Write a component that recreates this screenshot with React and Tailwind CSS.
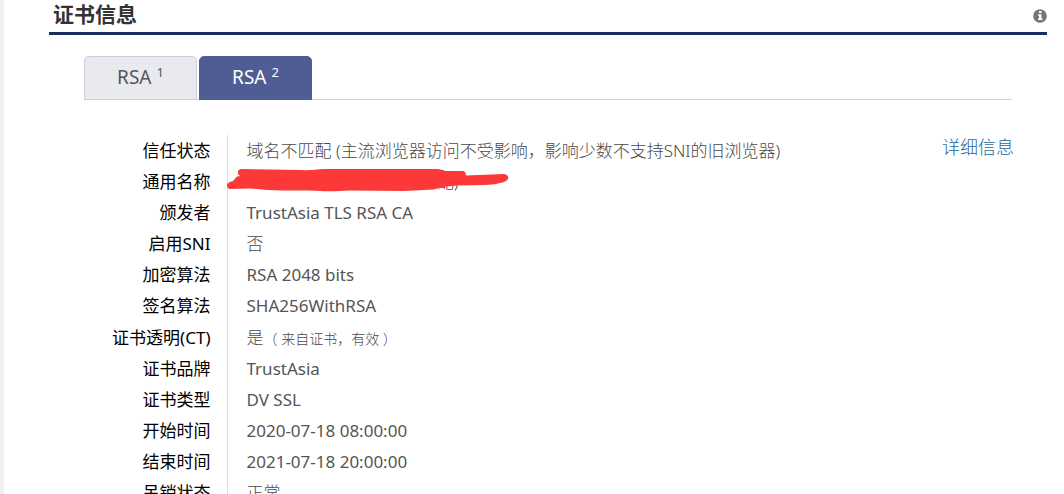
import React, { useState } from 'react';

const tabs = [
  { id: 1, name: 'RSA' },
  { id: 2, name: 'RSA' },
];

const rows = [
  { label: '信任状态', value: '域名不匹配 (主流浏览器访问不受影响，影响少数不支持SNI的旧浏览器)' },
  { label: '通用名称', value: '(不匹配)', hidden: true },
  { label: '颁发者', value: 'TrustAsia TLS RSA CA', latin: true },
  { label: '启用SNI', value: '否' },
  { label: '加密算法', value: 'RSA 2048 bits', latin: true },
  { label: '签名算法', value: 'SHA256WithRSA', latin: true },
  { label: '证书透明(CT)', value: '是', note: '（ 来自证书，有效 ）' },
  { label: '证书品牌', value: 'TrustAsia', latin: true },
  { label: '证书类型', value: 'DV SSL', latin: true },
  { label: '开始时间', value: '2020-07-18 08:00:00', latin: true },
  { label: '结束时间', value: '2021-07-18 20:00:00', latin: true },
  { label: '吊销状态', value: '正常' },
];

// red marker stroke over the common name
function Redaction() {
  return (
    <svg className="absolute -left-1 top-0" width="286" height="31" viewBox="0 0 286 31" fill="none" aria-hidden="true">
      <path
        d="M17 3 C13 4 13 8 16 10 C12 10 11 13 9 15 C3 16 1 20 5 23 L26 22.500 L44 24 C62 25 82 24 96 25 C110 26 120 24 128 24.500 L180 25 L210 23.500 L218 21 L234 19.500 L262 19 C270 18.500 277 17.500 281 15.500 C286 14 285 8.500 280 8 L242 9.500 C242 7 241 5 238 5 L221 5 C219 3.500 215 3 210 3 L100 3 C92 3 86 5 78 4 Z"
        fill="#fd3838"
      />
    </svg>
  );
}

function App() {
  const [activeTab, setActiveTab] = useState(2);

  return (
    <div className="h-screen overflow-hidden bg-white border-l-4 border-[#f0f0f0] pl-[45px] pr-[17px] text-[#4a4a4a] font-['Noto_Sans','Noto_Sans_CJK_SC',sans-serif]">
      <header className="flex items-center justify-between h-[35px] pb-1 pl-1 border-b-3 border-[#1b2e5f]">
        <h1 className="text-[21px] leading-7 font-bold text-[#333]">证书信息</h1>
        <button type="button" aria-label="说明" className="pt-1 text-[#757575]">
          <svg width="14" height="14" viewBox="0 0 14 14" aria-hidden="true">
            <circle cx="7" cy="7" r="6.8" fill="currentColor" />
            <path d="M6 2h2.500v2H6zM5 5.200h3.500v4.300h1V11H5V9.500h1V6.700H5z" fill="#fff" />
          </svg>
        </button>
      </header>

      <div className="pl-[35px] pr-[33px]">
        <div className="flex gap-[2px] mt-[21px] mr-[2px] border-b border-[#cdcce0]" role="tablist">
          {tabs.map((tab) => (
            <button
              key={tab.id}
              type="button"
              role="tab"
              aria-selected={activeTab === tab.id}
              onClick={() => setActiveTab(tab.id)}
              className={
                activeTab === tab.id
                  ? 'w-[113px] h-[44px] pb-0.5 -mb-px rounded-t-[5px] border border-[#4f5d94] bg-[#4f5d94] text-[19px] text-white'
                  : 'w-[113px] h-[44px] pb-0.5 -mb-px rounded-t-[5px] border border-[#cdcce0] bg-[#e9eaf0] text-[19px] text-[#555]'
              }
            >
              {tab.name} <sup className="text-[13px]">{tab.id}</sup>
            </button>
          ))}
        </div>

        <div className="flex items-start justify-between mt-[35px]">
          <table className="text-[17px] leading-[31px]">
            <tbody>
              {rows.map((row) => (
                <tr key={row.label} className={row.note ? 'h-8' : 'h-[31px]'}>
                  <th scope="row" className="w-[143px] p-0 pr-4 text-right font-normal text-black whitespace-nowrap">
                    {row.label}
                  </th>
                  <td
                    className={
                      row.latin
                        ? 'relative p-0 pl-[19px] border-l border-[#ddd] whitespace-nowrap text-[#555]'
                        : 'relative p-0 pl-[19px] border-l border-[#ddd] whitespace-nowrap font-light'
                    }
                  >
                    {row.hidden ? (
                      <>
                        <span className="block w-[212px] text-right">{row.value}</span>
                        <Redaction />
                      </>
                    ) : (
                      row.value
                    )}
                    {row.note && <span className="text-sm">{row.note}</span>}
                  </td>
                </tr>
              ))}
            </tbody>
          </table>
          <a href="#detail" className="text-lg leading-6 font-light text-[#23699f] whitespace-nowrap">详细信息</a>
        </div>
      </div>
    </div>
  );
}

export default App;
